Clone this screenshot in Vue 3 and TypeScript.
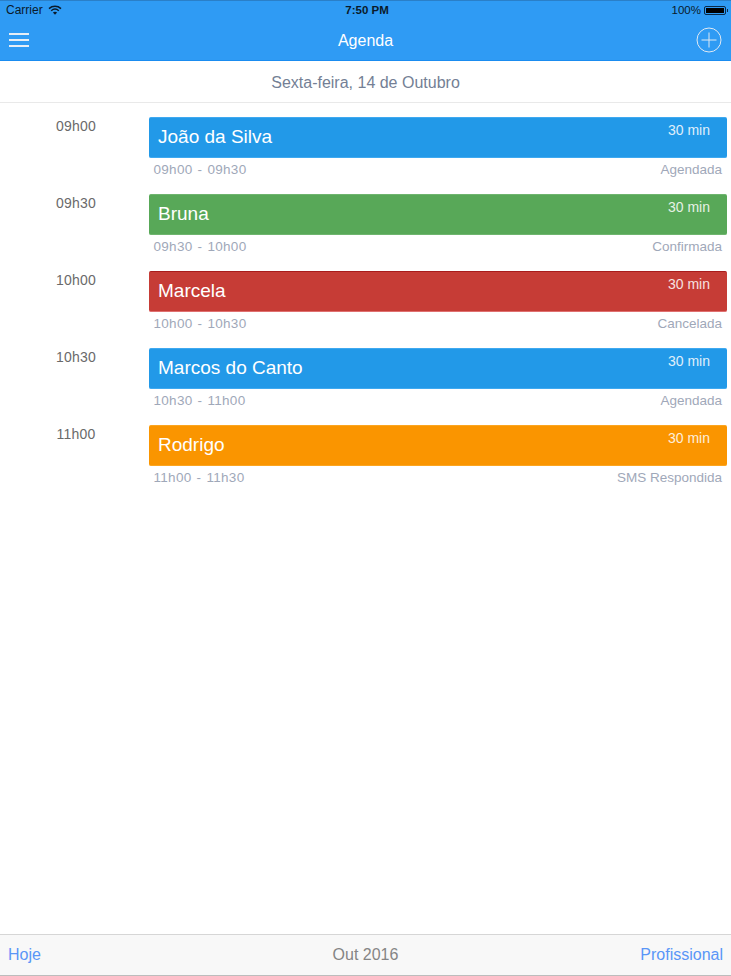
<template>
  <div class="screen">
    <div class="top-bar">
      <div class="status-bar">
        <div class="status-left">
          <span>Carrier</span>
          <svg class="wifi" width="14" height="10" viewBox="0 0 14 10">
            <path d="M1 3.6C4.4.6 9.6.6 13 3.6" fill="none" stroke="#0a1a2a" stroke-width="1.5" />
            <path d="M3.2 5.7c2.2-1.9 5.4-1.9 7.6 0" fill="none" stroke="#0a1a2a" stroke-width="1.5" />
            <path d="M7 9.8 4.9 7.6c1.2-1 3-1 4.2 0z" fill="#0a1a2a" />
          </svg>
        </div>
        <span class="status-time">7:50 PM</span>
        <div class="status-right">
          <span>100%</span>
          <div class="battery"><div class="battery-fill"></div></div>
          <div class="battery-tip"></div>
        </div>
      </div>
      <div class="nav-bar">
        <button class="nav-btn" type="button" aria-label="Menu">
          <span class="burger"></span>
          <span class="burger"></span>
          <span class="burger"></span>
        </button>
        <span class="nav-title">Agenda</span>
        <button class="nav-btn nav-add" type="button" aria-label="Adicionar">
          <svg width="26" height="26" viewBox="0 0 26 26">
            <circle cx="13" cy="13" r="12" fill="none" stroke="#dfe9f3" stroke-width="1" />
            <path d="M13 5.5v15M5.5 13h15" fill="none" stroke="#dfe9f3" stroke-width="1" />
          </svg>
        </button>
      </div>
    </div>

    <div class="date-bar">Sexta-feira, 14 de Outubro</div>

    <div class="agenda">
      <div v-for="item in items" :key="item.start" class="row">
        <div class="row-time">{{ item.start }}</div>
        <div class="row-body">
          <div class="card" :class="item.tone">
            <span class="card-name">{{ item.name }}</span>
            <span class="card-duration">30 min</span>
          </div>
          <div class="row-meta">
            <span class="meta-range">{{ item.start }} - {{ item.end }}</span>
            <span>{{ item.status }}</span>
          </div>
        </div>
      </div>
    </div>

    <div class="footer">
      <span class="footer-link">Hoje</span>
      <span class="footer-month">Out 2016</span>
      <span class="footer-link footer-right">Profissional</span>
    </div>
  </div>
</template>

<script setup lang="ts">
interface AgendaItem {
  start: string
  end: string
  name: string
  status: string
  tone: 'blue' | 'green' | 'red' | 'orange'
}

const items: AgendaItem[] = [
  { start: '09h00', end: '09h30', name: 'João da Silva', status: 'Agendada', tone: 'blue' },
  { start: '09h30', end: '10h00', name: 'Bruna', status: 'Confirmada', tone: 'green' },
  { start: '10h00', end: '10h30', name: 'Marcela', status: 'Cancelada', tone: 'red' },
  { start: '10h30', end: '11h00', name: 'Marcos do Canto', status: 'Agendada', tone: 'blue' },
  { start: '11h00', end: '11h30', name: 'Rodrigo', status: 'SMS Respondida', tone: 'orange' }
]
</script>

<style>
html,
body {
  margin: 0;
  background: #fff;
}
</style>

<style scoped>
.screen {
  display: flex;
  flex-direction: column;
  width: 731px;
  height: 976px;
  overflow: hidden;
  background: #fff;
  font-family: "Liberation Sans", Arial, sans-serif;
}

.top-bar {
  background: #2f9bf4;
  border-top: 1px solid #2a7fc8;
  border-bottom: 1px solid #1a8cf0;
}

.status-bar {
  display: grid;
  grid-template-columns: 1fr auto 1fr;
  align-items: center;
  height: 18px;
  padding: 0 3px 1px 6px;
  font-size: 12px;
  color: #0a1a2a;
}

.status-left {
  display: flex;
  align-items: center;
  gap: 5px;
}

.wifi {
  margin-top: -1px;
}

.status-time {
  font-weight: 700;
  font-size: 11.5px;
}

.status-right {
  display: flex;
  align-items: center;
  justify-content: flex-end;
  font-size: 11.5px;
}

.battery {
  width: 22px;
  height: 9px;
  margin-left: 3px;
  padding: 1px;
  box-sizing: border-box;
  border: 1px solid #0a2a48;
  border-radius: 2px;
}

.battery-fill {
  height: 100%;
  background: #000;
}

.battery-tip {
  width: 1px;
  height: 3px;
  margin-left: 1px;
  background: #0a2a48;
}

.nav-bar {
  display: flex;
  align-items: center;
  justify-content: space-between;
  height: 40px;
  padding: 0 9px;
  position: relative;
}

.nav-btn {
  display: flex;
  flex-direction: column;
  gap: 4px;
  padding: 0;
  border: 0;
  background: none;
}

.burger {
  display: block;
  width: 20px;
  height: 2px;
  background: #e6eef6;
}

.nav-add {
  display: block;
  height: 26px;
}

.nav-add svg {
  display: block;
}

.nav-title {
  position: absolute;
  left: 0;
  right: 0;
  margin-top: 1px;
  text-align: center;
  font-size: 16px;
  color: #fff;
}

.date-bar {
  height: 42px;
  padding-top: 2px;
  box-sizing: border-box;
  line-height: 40px;
  text-align: center;
  font-size: 16px;
  color: #747f95;
  border-bottom: 1px solid #e9e9e9;
}

.agenda {
  flex: 1;
  padding-top: 14px;
}

.row {
  display: flex;
  height: 77px;
}

.row-time {
  width: 149px;
  padding-left: 3px;
  box-sizing: border-box;
  text-align: center;
  font-size: 14px;
  letter-spacing: 0.2px;
  line-height: 18px;
  color: #6a6a6a;
}

.row-body {
  width: 578px;
}

.card {
  display: flex;
  justify-content: space-between;
  height: 41px;
  box-sizing: border-box;
  padding: 0 17px 0 9px;
  border-radius: 2px;
  color: #fff;
}

.card-name {
  font-size: 19px;
  line-height: 37px;
}

.card-duration {
  font-size: 14px;
  line-height: 24px;
  opacity: 0.85;
}

.blue {
  background: #2299e8;
  border: solid #3fa9f0;
  border-width: 1px 0;
}

.green {
  background: #58a858;
  border: solid #6fb56f;
  border-width: 1px 0;
}

.red {
  background: #c63c36;
  border-top: 1px solid #a81c1c;
  border-bottom: 1px solid #e07070;
}

.orange {
  background: #fa9500;
  border: solid #fba520;
  border-width: 1px 0;
}

.row-meta {
  display: flex;
  justify-content: space-between;
  padding: 3px 5px 0 4.5px;
  font-size: 13.5px;
  line-height: 18px;
  color: #9fa8b9;
}

.meta-range {
  letter-spacing: 0.3px;
  word-spacing: 1px;
}

.footer {
  display: grid;
  grid-template-columns: 1fr auto 1fr;
  align-items: center;
  height: 40px;
  padding: 0 8px;
  background: #f8f8f8;
  border-top: 1px solid #d6d6d6;
  border-bottom: 1px solid #bdbdbd;
  font-size: 16px;
}

.footer-link {
  color: #5a96f7;
}

.footer-right {
  text-align: right;
}

.footer-month {
  color: #858585;
}
</style>
